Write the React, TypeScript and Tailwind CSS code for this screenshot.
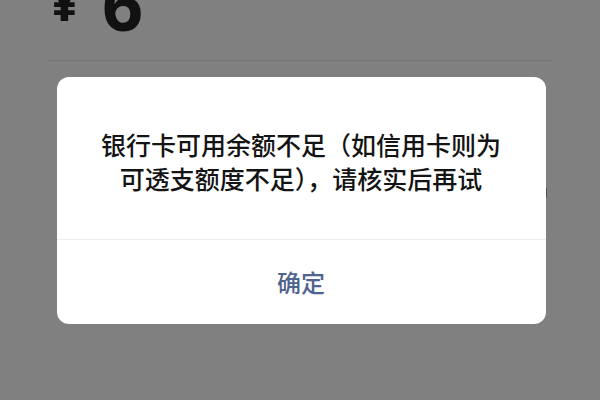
export default function App() {
  return (
    <div
      className="relative w-[600px] h-[400px] overflow-hidden bg-[#808080]"
      style={{ fontFamily: '"Noto Sans", "Noto Sans CJK SC", sans-serif' }}
    >
      {/* page behind the mask */}
      <div className="mx-[48px] h-[61px] border-b border-[#767676] flex items-start overflow-hidden">
        <span className="ml-[1px] -mt-[27px] text-[54px] font-bold leading-none text-[#111]">¥</span>
        <span className="ml-[22px] -mt-[33px] text-[72px] font-bold leading-none text-[#111]">6</span>
      </div>
      <div className="ml-[545px] mt-[127px] w-[2px] h-[10px] bg-[#555]" />

      {/* dialog */}
      <div className="absolute inset-0 flex items-center justify-center">
        <div className="w-[489px] h-[247px] rounded-[12px] bg-white flex flex-col translate-x-[1px]">
          <div
            className="h-[162px] pt-[50px] text-center text-[25px] font-medium leading-[34px] text-[#141414]"
            style={{ fontFamily: '"Noto Sans CJK SC", sans-serif' }}
          >
            <p>银行卡可用余额不足（如信用卡则为</p>
            <p>可透支额度不足），请核实后再试</p>
          </div>
          <div className="h-px bg-[#eeeeee]" />
          <div
            className="flex-1 flex items-center justify-center text-[24px] font-medium text-[#4f648e]"
            style={{ fontFamily: '"Noto Sans CJK SC", sans-serif' }}
          >
            确定
          </div>
        </div>
      </div>
    </div>
  )
}
